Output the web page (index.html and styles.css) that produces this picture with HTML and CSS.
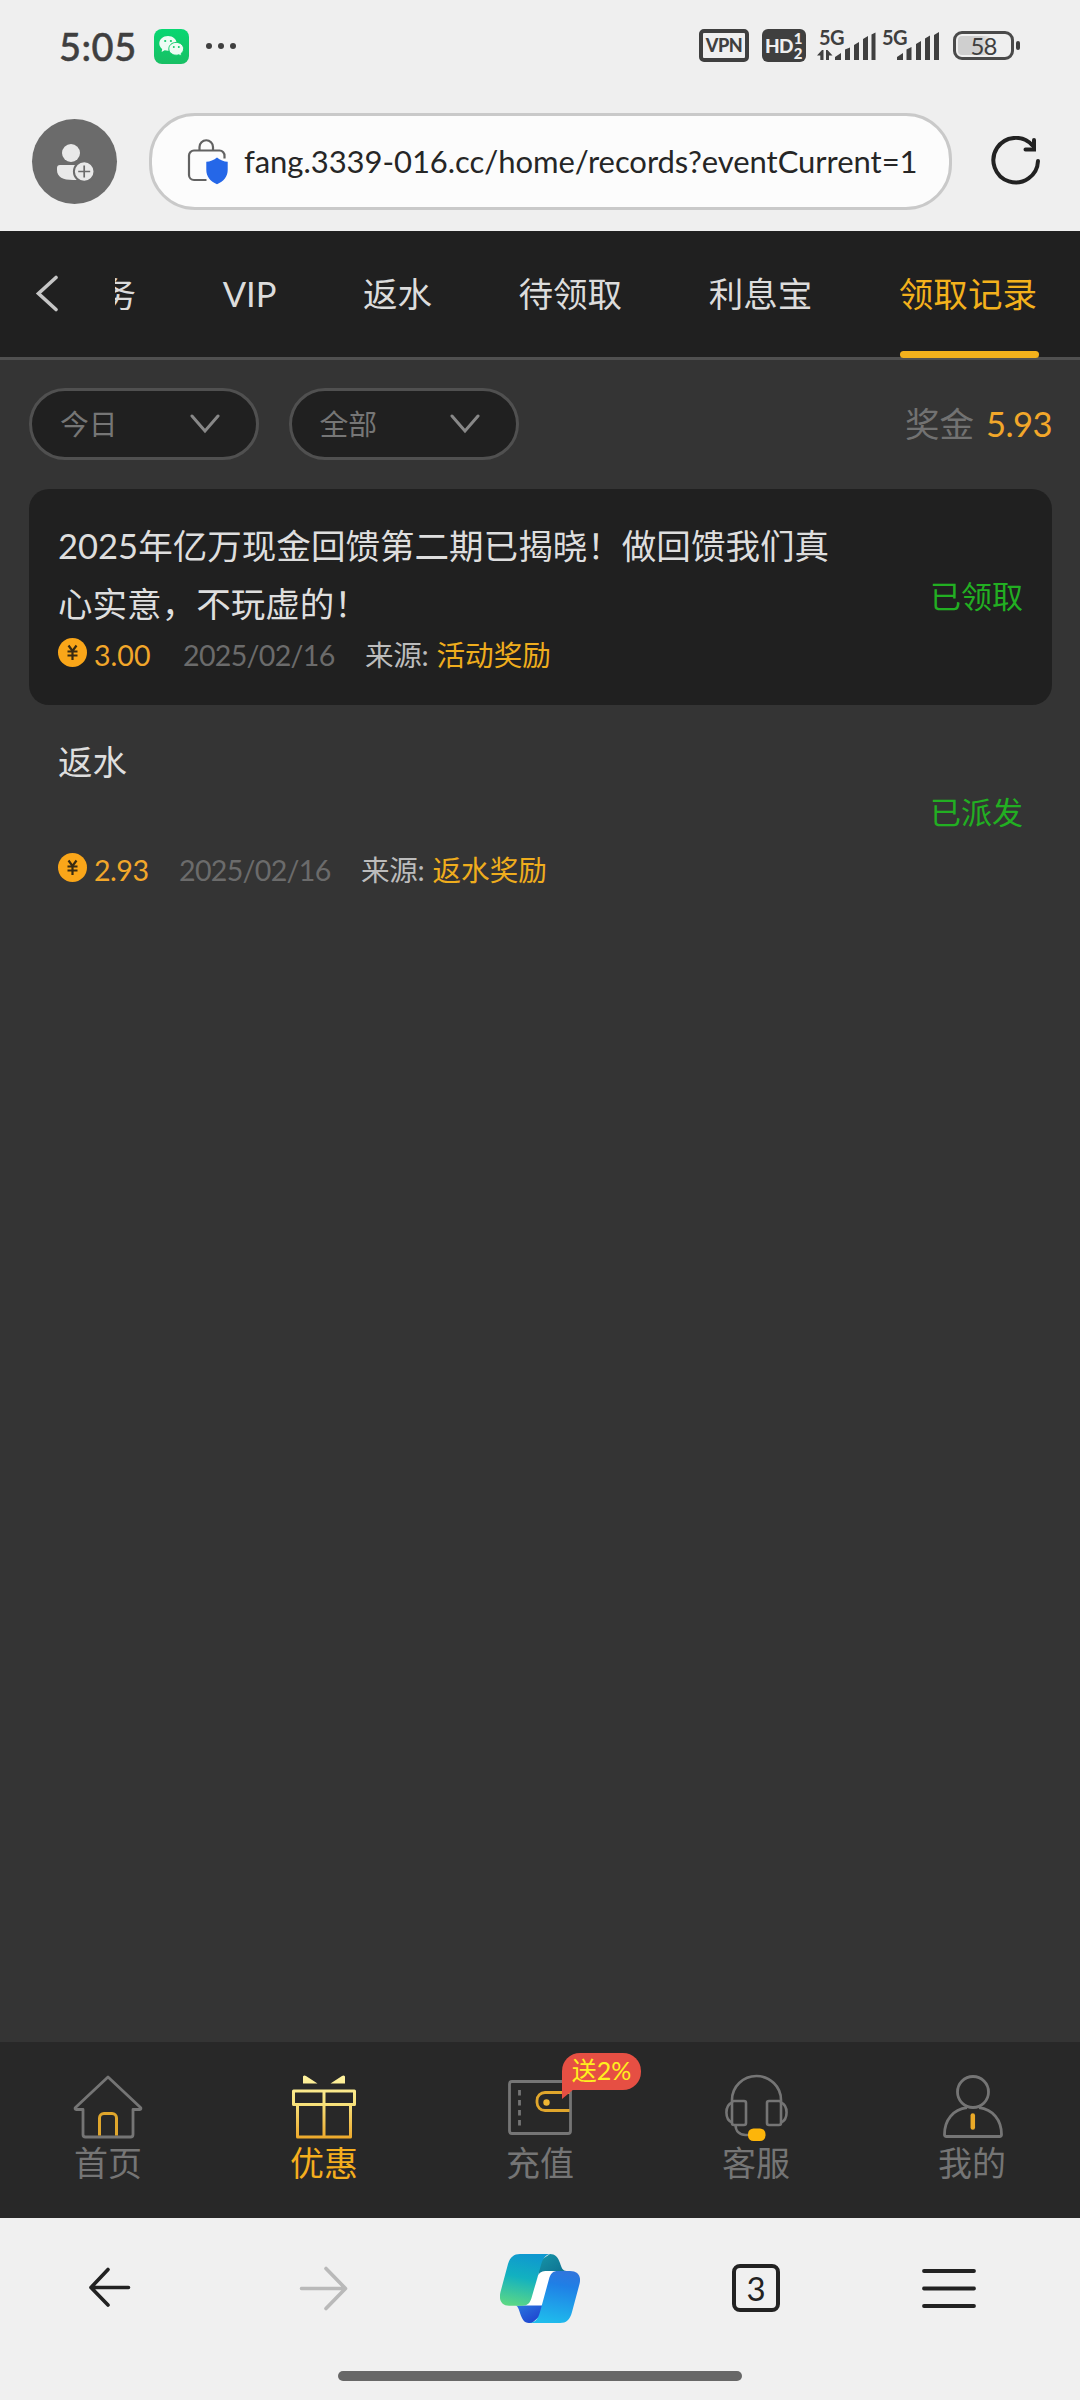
FILE: index.html
```html
<!DOCTYPE html>
<html lang="zh-CN">
<head>
<meta charset="utf-8">
<title>领取记录</title>
<link rel="stylesheet" href="styles.css">
</head>
<body>
<header class="chrome-top">
  <div class="status-bar">
    <span class="clock">5:05</span>
    <svg class="wechat" width="35" height="35" viewBox="0 0 35 35">
      <defs><linearGradient id="wx" x1="0" y1="0" x2="0" y2="1"><stop offset="0" stop-color="#08d772"/><stop offset="1" stop-color="#18bf64"/></linearGradient></defs>
      <rect width="35" height="35" rx="8" fill="url(#wx)"/>
      <path d="M14 7c-5 0-8.700 3.300-8.700 7.500 0 2.300 1.200 4.200 2.900 5.500l-.6 2.900 3.100-1.700c1 .3 2.200.5 3.300.5 5 0 8.700-3.100 8.700-7.200S19 7 14 7z" fill="#eefcf4"/>
      <path d="M22.200 13.400c-4.200 0-7.400 2.900-7.400 6.400s3.200 6.400 7.400 6.400c.9 0 1.900-.2 2.700-.4l2.700 1.400-.6-2.500c1.600-1.200 2.600-3 2.600-4.900 0-3.500-3.200-6.400-7.400-6.400z" fill="#eefcf4" stroke="#12cb6b" stroke-width="1"/>
      <g fill="#12cb6b"><circle cx="11.200" cy="12" r="1.100"/><circle cx="16.900" cy="12" r="1.100"/><circle cx="19.800" cy="18" r="1"/><circle cx="24.800" cy="18" r="1"/></g>
    </svg>
    <span class="dots"><i></i><i></i><i></i></span>
    <span class="vpn">VPN</span>
    <span class="hd">HD<span class="hd-sim"><b>1</b><b>2</b></span></span>
    <svg class="signal signal-a" width="58" height="34" viewBox="0 0 58 34">
      <text x="2" y="15.500" class="net">5G</text>
      <g fill="#3f3f3f"><path d="M0 26.500L5 21v10H3.300v-4.500zM5 21h1.500v10H5zM9 21h1.500l5 5.500h-3.500V31H9zM18 31v-3l6-4v7zM28 20.500l5-2V31h-5zM37 16l5-3v18h-5zM46 10l5-3v24h-5zM54.500 5.500l4-2V31h-4z"/></g>
    </svg>
    <svg class="signal signal-b" width="58" height="34" viewBox="0 0 58 34">
      <text x="0" y="15.500" class="net">5G</text>
      <g fill="#3f3f3f"><path d="M15 31v-3l6-4v7zM24.500 20.500l5-2.500v13h-5zM34 15l5-3v19h-5zM43 9.500l5-3V31h-5zM52 6l5-3v28h-5z"/></g>
    </svg>
    <span class="battery"><span class="battery-num">58</span></span>
    <span class="battery-nub"></span>
  </div>
  <div class="address-row">
    <span class="avatar">
      <svg width="85" height="85" viewBox="0 0 85 85">
        <circle cx="39" cy="34" r="9" fill="#e9e9e9"/>
        <path d="M28 46h18v15h-5C31 61 25 58 25 51v-2c0-2 1-3 3-3z" fill="#e9e9e9"/>
        <circle cx="52.200" cy="52.500" r="10.300" fill="#e9e9e9" stroke="#6b6b6b" stroke-width="2"/>
        <path d="M52.200 46.500v12M46.200 52.500h12" stroke="#6b6b6b" stroke-width="1.700"/>
      </svg>
    </span>
    <div class="url-pill">
      <svg width="42" height="48" viewBox="0 0 42 48">
        <path d="M12.500 13.500V10a6.700 6.700 0 0 1 13.500 0v3.500M37.500 21.500V19a5 5 0 0 0-5-5.500H7a5 5 0 0 0-5 5V38a5 5 0 0 0 5 5h12.500" fill="none" stroke="#626262" stroke-width="2.200"/>
        <path d="M30 20.500c3 2.700 7 4.200 10.700 4.200v8c0 7-4 11.500-10.700 14.500-6.700-3-10.700-7.500-10.700-14.500v-8c3.700 0 7.700-1.500 10.700-4.200z" fill="#2567e8"/>
      </svg>
      <span class="url">fang.3339-016.cc/home/records?eventCurrent=1</span>
    </div>
    <svg class="reload" width="50" height="50" viewBox="0 0 50 50">
      <path d="M47 25A22.300 22.300 0 1 1 41.500 9.500" fill="none" stroke="#222" stroke-width="4" stroke-linecap="round"/>
      <path d="M43 4v9.500H34.500" fill="none" stroke="#222" stroke-width="4" stroke-linecap="round"/>
    </svg>
  </div>
</header>

<main class="page">
  <nav class="tabs">
    <svg class="tabs-back" width="24" height="38" viewBox="0 0 24 38"><path d="M21 2.500L3.500 18.500l17.500 16" fill="none" stroke="#c6c6c6" stroke-width="3.600" stroke-linecap="round"/></svg>
    <div class="tab-strip">
      <a class="tab">任务</a><a class="tab">VIP</a><a class="tab">返水</a><a class="tab">待领取</a><a class="tab">利息宝</a><a class="tab active">领取记录</a>
    </div>
  </nav>
  <section class="filters">
    <div class="select">今日<svg width="30" height="20" viewBox="0 0 30 20"><path d="M2 2l13 15L28 2" fill="none" stroke="#888" stroke-width="3" stroke-linecap="round"/></svg></div>
    <div class="select">全部<svg width="30" height="20" viewBox="0 0 30 20"><path d="M2 2l13 15L28 2" fill="none" stroke="#888" stroke-width="3" stroke-linecap="round"/></svg></div>
    <div class="bonus">奖金<span>5.93</span></div>
  </section>
  <ul class="records">
    <li class="record filled">
      <div class="record-main">
        <h3>2025年亿万现金回馈第二期已揭晓！做回馈我们真心实意，不玩虚的！</h3>
        <div class="meta">
          <svg class="coin" width="29" height="29" viewBox="0 0 29 29"><circle cx="14.500" cy="14.500" r="14.500" fill="#faa619"/><path d="M10.500 7.500l4 5.500 4-5.500M14.500 13v9M9.500 13.500h10M9.500 17.500h10" fill="none" stroke="#382a12" stroke-width="2.200"/></svg>
          <span class="amount">3.00</span><span class="date">2025/02/16</span><span class="source">来源:</span><span class="kind">活动奖励</span>
        </div>
      </div>
      <span class="state">已领取</span>
    </li>
    <li class="record">
      <div class="record-main">
        <h3>返水</h3>
        <div class="meta">
          <svg class="coin" width="29" height="29" viewBox="0 0 29 29"><circle cx="14.500" cy="14.500" r="14.500" fill="#faa619"/><path d="M10.500 7.500l4 5.500 4-5.500M14.500 13v9M9.500 13.500h10M9.500 17.500h10" fill="none" stroke="#382a12" stroke-width="2.200"/></svg>
          <span class="amount narrow">2.93</span><span class="date">2025/02/16</span><span class="source">来源:</span><span class="kind">返水奖励</span>
        </div>
      </div>
      <span class="state">已派发</span>
    </li>
  </ul>
</main>

<nav class="site-nav">
  <a class="nav-item">
    <svg width="72" height="66" viewBox="0 0 72 66">
      <path d="M36 4L3.500 34.500c-.8.800-.5 2 .8 2H11V61.500a2.500 2.500 0 0 0 2.500 2.500h45a2.500 2.500 0 0 0 2.500-2.500V36.500h6.700c1.300 0 1.600-1.200.8-2z" fill="none" stroke="#757575" stroke-width="2.800" stroke-linejoin="round"/>
      <path d="M27.500 62.500V45a4.500 4.500 0 0 1 4.500-4.500h8a4.500 4.500 0 0 1 4.500 4.500v17.500" fill="none" stroke="#e0a62c" stroke-width="3"/>
    </svg>首页</a>
  <a class="nav-item active">
    <svg width="72" height="66" viewBox="0 0 72 66">
      <defs><linearGradient id="gift" gradientUnits="userSpaceOnUse" x1="0" y1="2" x2="0" y2="65"><stop offset="0" stop-color="#fff3a0"/><stop offset=".45" stop-color="#f7e27c"/><stop offset="1" stop-color="#eda92b"/></linearGradient></defs>
      <path d="M15 3.500q1-1.500 3-.5l11.500 7.500H15zM57 3.500q-1-1.500-3-.5l-11.500 7.500H57z" fill="url(#gift)"/>
      <path d="M5.500 18h61v13.500h-61zM9.500 31.500h53V64h-53zM36 18.010V64" fill="none" stroke="url(#gift)" stroke-width="3" stroke-linejoin="round"/>
    </svg>优惠</a>
  <a class="nav-item recharge">
    <svg width="72" height="66" viewBox="0 0 72 66">
      <rect x="5.500" y="8.500" width="61" height="52" rx="2.500" fill="none" stroke="#757575" stroke-width="2.800"/>
      <path d="M15.500 17v36" stroke="#757575" stroke-width="2.800" stroke-dasharray="5.500 4.500"/>
      <path d="M65.500 19.500H41a8 8 0 0 0-8 8v2a8 8 0 0 0 8 8H65.500" fill="none" stroke="#e0a62c" stroke-width="2.800"/>
      <circle cx="42.500" cy="29.500" r="3.200" fill="#f0b632"/>
    </svg>充值
    <span class="badge">送2%<svg width="12" height="10" viewBox="0 0 12 10"><path d="M0 0h12L0 10z" fill="#e64f43"/></svg></span></a>
  <a class="nav-item">
    <svg width="72" height="66" viewBox="0 0 72 66">
      <g fill="none" stroke="#757575" stroke-width="2.600">
      <path d="M12 29V27a24.500 24 0 0 1 49 0V29M15.500 51.500c0 7 4.500 10.500 10 10.500h3"/>
      <rect x="12" y="28" width="14" height="24" rx="2"/><rect x="47" y="28" width="14" height="24" rx="2"/>
      <path d="M12 29.500a8 10.500 0 0 0 0 20M61 29.500a8 10.500 0 0 1 0 20"/></g>
      <rect x="28" y="55.500" width="17.500" height="12.500" rx="5.500" fill="#fdb50a"/>
    </svg>客服</a>
  <a class="nav-item">
    <svg width="72" height="66" viewBox="0 0 72 66">
      <g fill="none" stroke="#757575" stroke-width="2.800"><circle cx="37" cy="19" r="15.500"/>
      <path d="M31 34.700C17 36.500 8.500 47 8.500 61.500a2 2 0 0 0 2 2h53a2 2 0 0 0 2-2C65.500 47 57 36.500 43 34.700"/></g>
      <path d="M36.800 42.500v12" stroke="#eaa927" stroke-width="4.500" stroke-linecap="round"/>
    </svg>我的</a>
</nav>

<footer class="chrome-bottom">
  <div class="toolbar">
    <svg width="56" height="56" viewBox="0 0 56 56"><path d="M28 9.500L11 27.500l17 17.500M11.500 27.500h37" fill="none" stroke="#222" stroke-width="3.600" stroke-linecap="round" stroke-linejoin="round"/></svg>
    <svg width="56" height="56" viewBox="0 0 56 56"><path d="M30 8.500l19.500 20L30 48.500M5.500 28.500h43" fill="none" stroke="#b9b9b9" stroke-width="3.600" stroke-linecap="round" stroke-linejoin="round"/></svg>
    <svg width="80" height="69" viewBox="0 0 80 69">
      <defs>
        <linearGradient id="cl" x1=".5" y1="0" x2=".3" y2="1"><stop offset="0" stop-color="#0f98cf"/><stop offset=".45" stop-color="#12b1c0"/><stop offset="1" stop-color="#5bd786"/></linearGradient>
        <linearGradient id="cr" x1=".6" y1="0" x2=".4" y2="1"><stop offset="0" stop-color="#2f76dd"/><stop offset=".25" stop-color="#1f7fe6"/><stop offset="1" stop-color="#1fbcec"/></linearGradient>
        <linearGradient id="ct" x1="0" y1="0" x2="1" y2="1"><stop offset="0" stop-color="#1796a8"/><stop offset="1" stop-color="#0d6d8e"/></linearGradient>
        <linearGradient id="cb" x1="0" y1="0" x2="1" y2="1"><stop offset="0" stop-color="#2c79e0"/><stop offset="1" stop-color="#1b38cb"/></linearGradient>
      </defs>
      <path d="M36 30L40 16 53 16.500 43 52H26z" fill="#fff"/>
      <path d="M50 0c5 0 8 3 10 9 1.500 5 3 8 6.500 8H47c-5 0-7 1-8.500 4L38 8z" fill="url(#ct)"/>
      <path d="M15 51.500h27l3 6-13 11.500h-3c-5 0-7-4-9-10-1.500-5-2.500-7.500-5-7.500z" fill="url(#cb)"/>
      <path d="M20 0h31c-5 0-8 4-10 11L31.500 44c-1.500 5-4 7.700-9 7.700H9C1.500 51.700-1.500 46 .5 38L8 10C10 3 14 0 20 0z" fill="url(#cl)"/>
      <path d="M58 17h12c8 0 11.500 5 9.500 13L72 58c-2 8-6 11-12 11H29c6 0 9-4 11-11l9-33c1.500-5.500 4-8 9-8z" fill="url(#cr)"/>
    </svg>
    <span class="tab-count">3</span>
    <svg width="56" height="56" viewBox="0 0 56 56"><path d="M3 11h50M3 28.500h50M3 46h50" stroke="#222" stroke-width="3.800" stroke-linecap="round"/></svg>
  </div>
  <div class="home-bar"></div>
</footer>
</body>
</html>
```

FILE: styles.css
```css
* { box-sizing: border-box; }
body {
  margin: 0;
  width: 1080px;
  height: 2400px;
  display: flex;
  flex-direction: column;
  background: #343434;
  font-family: Lato, "Noto Sans CJK SC", sans-serif;
  overflow: hidden;
}
svg { display: block; flex: none; }

/* Browser top */
.chrome-top { height: 231px; background: #efefef; flex: none; }
.status-bar { height: 93px; padding: 29px 0 0 59px; display: flex; align-items: flex-start; color: #3f3f3f; }
.clock { width: 95px; font-size: 38px; line-height: 35px; font-weight: 500; letter-spacing: .5px; white-space: nowrap; -webkit-text-stroke: .5px #3f3f3f; }
.dots { display: flex; gap: 6px; margin: 14px 0 0 17px; }
.dots i { width: 6px; height: 6px; border-radius: 3px; background: #3f3f3f; }
.vpn { margin-left: 463px; width: 50px; height: 33px; border: 4px solid #3f3f3f; border-radius: 5px; font: 900 18px/25px Lato, sans-serif; letter-spacing: -.5px; display: flex; justify-content: center; }
.hd { margin-left: 13px; width: 44px; height: 33px; border-radius: 6px; background: #3f3f3f; color: #efefef; font: 900 19px/34px Lato, sans-serif; letter-spacing: -.7px; padding-left: 3px; display: flex; }
.hd-sim { display: flex; flex-direction: column; font-size: 15px; line-height: 14.500px; padding: 2px 0 0 1px; }
.signal { overflow: visible; }
.signal-a { margin-left: 11px; }
.signal-b { margin-left: 7px; }
.net { font: bold 20px Lato, sans-serif; letter-spacing: -.6px; fill: #3f3f3f; }
.battery { margin: 2px 0 0 13px; width: 61px; height: 29px; border: 3px solid #4a4a4a; border-radius: 9px; padding: 2px; }
.battery-num { display: block; height: 19px; border-radius: 4px; background: linear-gradient(90deg, #cfcfcf 45%, transparent 65%); font-size: 24px; line-height: 20px; text-align: center; letter-spacing: -1px; color: #3f3f3f; }
.battery-nub { margin: 12px 0 0 2px; width: 4px; height: 9px; border-radius: 2px; background: #3f3f3f; }

.address-row { display: flex; align-items: center; height: 136px; padding: 0 0 0 32px; }
.avatar { width: 85px; height: 85px; border-radius: 50%; background: #6b6b6b; flex: none; }
.url-pill { margin-left: 32px; width: 803px; height: 97px; border: 3px solid #c9c9c9; border-radius: 46px; background: #fcfcfc; display: flex; align-items: center; padding-left: 35px; flex: none; }
.url { margin-left: 15px; font-size: 31px; line-height: 40px; letter-spacing: -.04px; color: #262626; white-space: nowrap; }
.reload { margin-left: 39px; }

/* Record page */
.page { height: 1811px; flex: none; background: #343434; }
.tabs { height: 129px; background: #202020; border-bottom: 3px solid #505050; display: flex; align-items: center; padding-left: 35px; }
.tab-strip { margin-left: 56px; width: 965px; height: 127px; overflow: hidden; display: flex; justify-content: flex-end; gap: 86.500px; padding-right: 41.500px; align-self: flex-start; }
.tab { flex: none; font-size: 34.560px; line-height: 126px; color: #dcdcdc; position: relative; left: -1.500px; white-space: nowrap; }
.tab.active { color: #f3b11c; }
.tab.active::after { content: ""; position: absolute; left: 1px; right: -2px; bottom: 0; height: 7px; border-radius: 4px; background: #f3b11c; }
.filters { display: flex; align-items: center; padding: 28px 28px 0 29px; }
.select { width: 230px; height: 72px; margin-right: 29.500px; border: 3px solid #505050; border-radius: 36px; background: #202020; color: #767676; font-size: 28.800px; line-height: 66px; padding: 0 36px 0 28px; display: flex; align-items: center; justify-content: space-between; }
.bonus { margin-left: auto; font-size: 34.600px; line-height: 72px; color: #727272; }
.bonus span { margin-left: 12px; letter-spacing: -.6px; color: #f2a72a; }
.records { list-style: none; margin: 29px 28px 0 29px; padding: 0; }
.record { height: 216px; padding: 28px 29px; border-radius: 20px; display: flex; align-items: center; justify-content: space-between; }
.record.filled { background: #202020; }
.record-main { width: 780px; height: 160px; display: flex; flex-direction: column; }
.record h3 { margin: 0; height: 118px; font-size: 34.560px; line-height: 57.500px; font-weight: 400; color: #dedede; }
.meta { display: flex; align-items: center; height: 46px; font-size: 28.600px; line-height: 46px; white-space: nowrap; }
.coin { margin-right: 7px; margin-top: -5px; }
.amount { width: 60px; color: #f2a72a; }
.amount.narrow { width: 56px; letter-spacing: -.5px; }
.date { margin-left: 29px; width: 153px; letter-spacing: -.7px; color: #6b6b6b; }
.source { margin-left: 29px; letter-spacing: -.3px; color: #bcbcbc; }
.kind { margin-left: 8px; color: #efad1d; }
.state { position: relative; top: -1.500px; color: #22af22; font-size: 31px; line-height: 44px; }

/* Site navigation */
.site-nav { height: 176px; flex: none; background: #282828; display: grid; grid-template-columns: repeat(5, 1fr); }
.nav-item { position: relative; display: flex; flex-direction: column; align-items: center; padding-top: 31px; color: #757575; font-size: 34px; line-height: 48px; }
.nav-item svg { overflow: visible; }
.nav-item.active { color: #f5ae1e; }
.badge { position: absolute; left: 130px; top: 11px; width: 79px; height: 37px; border-radius: 18px 18px 18px 0; background: #e64f43; color: #fff01e; font-size: 25px; line-height: 35px; text-align: center; white-space: nowrap; }
.badge svg { position: absolute; left: 0; top: 36px; }

/* Browser bottom */
.chrome-bottom { height: 182px; flex: none; background: #f0f0f0; padding-top: 32px; }
.toolbar { height: 76px; display: grid; grid-template-columns: repeat(4, 216px) 170px; align-items: center; justify-items: center; }
.tab-count { width: 48px; height: 48px; border: 4px solid #222; border-radius: 8px; font-size: 33px; line-height: 41px; text-align: center; color: #222; }
.home-bar { margin: 45px auto 0; width: 404px; height: 10px; border-radius: 5px; background: #676767; }
```
